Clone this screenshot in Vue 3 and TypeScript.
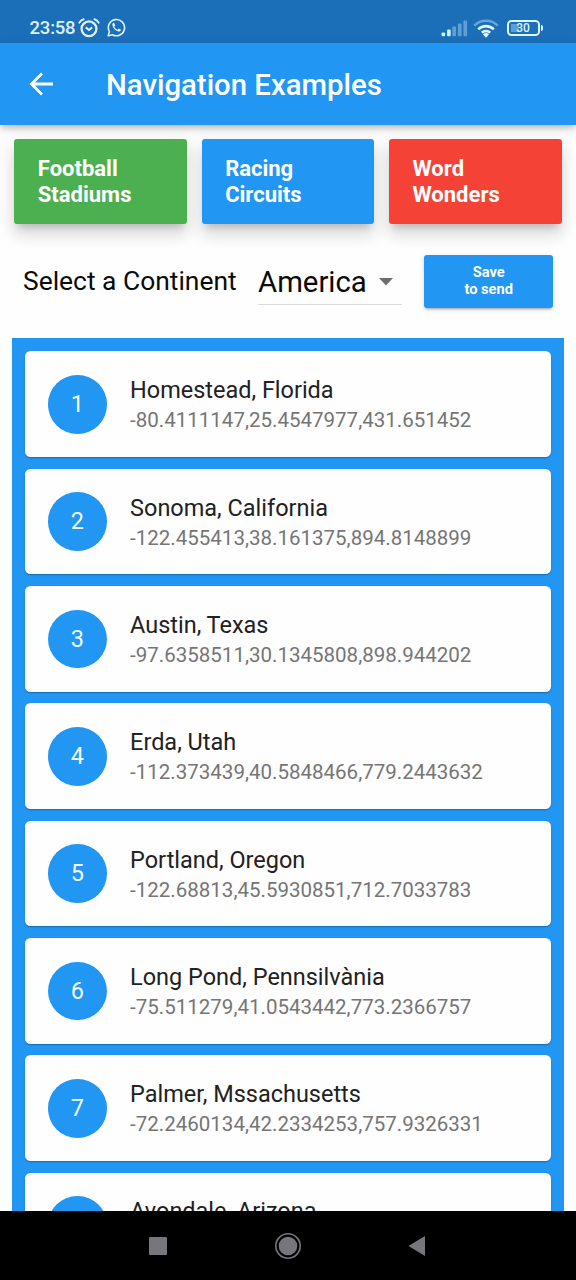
<script setup lang="ts">
interface Category {
  lines: [string, string]
  tone: 'green' | 'blue' | 'red'
}

interface Place {
  name: string
  coords: string
}

const categories: Category[] = [
  { lines: ['Football', 'Stadiums'], tone: 'green' },
  { lines: ['Racing', 'Circuits'], tone: 'blue' },
  { lines: ['Word', 'Wonders'], tone: 'red' },
]

const places: Place[] = [
  { name: 'Homestead, Florida', coords: '-80.4111147,25.4547977,431.651452' },
  { name: 'Sonoma, California', coords: '-122.455413,38.161375,894.8148899' },
  { name: 'Austin, Texas', coords: '-97.6358511,30.1345808,898.944202' },
  { name: 'Erda, Utah', coords: '-112.373439,40.5848466,779.2443632' },
  { name: 'Portland, Oregon', coords: '-122.68813,45.5930851,712.7033783' },
  { name: 'Long Pond, Pennsilvània', coords: '-75.511279,41.0543442,773.2366757' },
  { name: 'Palmer, Mssachusetts', coords: '-72.2460134,42.2334253,757.9326331' },
  { name: 'Avondale, Arizona', coords: '' },
]
</script>

<template>
  <div class="screen">
    <header class="status">
      <span class="clock">23:58</span>
      <svg class="alarm" width="22" height="20" viewBox="0 0 22 20" fill="none" stroke="#dff1fc">
        <circle cx="11" cy="10.8" r="7.4" stroke-width="2.3" />
        <path d="M1.4 4.6Q2.8 2 5.6 1.2M20.6 4.6Q19.2 2 16.4 1.2" stroke-width="2" stroke-linecap="round" />
        <path d="m7.8 9.4 3.2 2.6 3.2-2.6" stroke-width="2" />
      </svg>
      <svg class="whatsapp" width="19" height="19" viewBox="0 0 19 19" fill="none" stroke="#dff1fc">
        <path d="M1.2 17.8 2.4 13.6A8.1 8.1 0 1 1 5.5 16.7Z" stroke-width="1.6" stroke-linejoin="round" />
        <path d="M6.600 4.800c-.9.300-1.500 1.300-1.200 2.500.7 3.100 3 5.500 6.200 6.300 1.200.2 2.200-.5 2.400-1.800l-2.200-1.200-1.300 1.200c-1.500-.6-2.600-1.700-3.200-3.100l.9-1.200-.9-2.600z" fill="#dff1fc" stroke="none" />
      </svg>
      <div class="spacer"></div>
      <svg class="signal" width="27" height="17" viewBox="0 0 27 17" fill="#5f9fd6">
        <rect x="0.5" y="12.5" width="3.7" height="3.8" rx="1" fill="#c9f1ff" />
        <rect x="6" y="9.5" width="3.7" height="6.8" rx="1" fill="#c9f1ff" />
        <rect x="11.3" y="6.5" width="3.7" height="9.8" rx="1" />
        <rect x="16.9" y="3.5" width="3.7" height="12.8" rx="1" />
        <rect x="22.4" y="0.5" width="3.7" height="15.8" rx="1" />
      </svg>
      <svg class="wifi" width="26" height="19" viewBox="0 0 26 19" fill="none" stroke-width="2.6">
        <path d="M1.3 6.6a16.6 16.6 0 0 1 23.4 0" stroke="#68a5d9" />
        <path d="M5.2 10.4a11 11 0 0 1 15.6 0" stroke="#dff5ff" />
        <path d="M8.8 13.7a6.2 6.2 0 0 1 8.4 0" stroke="#dff5ff" />
        <path d="M10 15.5a4.3 4.3 0 0 1 6 0L13 18.700z" fill="#dff5ff" stroke="none" />
      </svg>
      <div class="battery"><span class="cell"><i class="charge"></i><b class="level">30</b></span><i class="tip"></i></div>
    </header>

    <nav class="appbar">
      <svg class="back" width="26" height="26" viewBox="0 0 26 26" fill="none" stroke="#fff" stroke-width="2.8">
        <path d="M25 13H4M14 2.500 3.500 13 14 23.500" />
      </svg>
      <h1 class="title">Navigation Examples</h1>
    </nav>

    <main class="content">
      <div class="categories">
        <button v-for="c in categories" :key="c.tone" class="category" :class="c.tone">
          <span v-for="line in c.lines" :key="line">{{ line }}</span>
        </button>
      </div>

      <div class="filter">
        <span class="label">Select a Continent</span>
        <div class="select">
          <span class="value">America</span>
          <svg class="caret" width="14" height="8" viewBox="0 0 14 8" fill="#6e6e6e"><path d="M0 0h14L7 7.500z" /></svg>
        </div>
        <button class="save"><span>Save</span><span>to send</span></button>
      </div>

      <section class="list">
        <article v-for="(p, i) in places" :key="p.name" class="card">
          <div class="badge">{{ i + 1 }}</div>
          <div class="info">
            <div class="name">{{ p.name }}</div>
            <div class="coords">{{ p.coords }}</div>
          </div>
        </article>
      </section>
    </main>

    <footer class="navbar">
      <svg width="18" height="18" viewBox="0 0 18 18"><rect width="18" height="18" rx="1" fill="#77767a" /></svg>
      <svg width="28" height="28" viewBox="0 0 28 28" fill="#77767a">
        <circle cx="14" cy="14" r="12.2" fill="none" stroke="#77767a" stroke-width="1.6" />
        <circle cx="14" cy="14" r="9.3" />
      </svg>
      <svg width="18" height="22" viewBox="0 0 18 22"><path d="M0.500 11 17 1v20z" fill="#77767a" /></svg>
    </footer>
  </div>
</template>

<style>
body {
  margin: 0;
}
</style>

<style scoped>
.screen {
  width: 576px;
  height: 1280px;
  display: flex;
  flex-direction: column;
  overflow: hidden;
  background: #fefefe;
  font-family: Roboto, 'Liberation Sans', sans-serif;
}

.status {
  height: 43px;
  flex: none;
  box-sizing: border-box;
  padding: 13px 33.5px 0 29.5px;
  display: flex;
  align-items: center;
  background: #1b6fb8;
  color: #dff1fc;
}

.clock {
  width: 48.5px;
  font-size: 18.5px;
  line-height: 29px;
  font-weight: 500;
  letter-spacing: -0.2px;
}

.alarm {
  margin-top: -1px;
}

.whatsapp {
  margin-left: 7px;
  margin-top: -1px;
}

.spacer {
  flex: 1;
}

.wifi {
  margin: 0 8px 0 5px;
}

.battery {
  display: flex;
  align-items: center;
  gap: 1px;
}

.cell {
  position: relative;
  box-sizing: border-box;
  width: 33px;
  height: 16px;
  border: 2px solid #dff5ff;
  border-radius: 4.5px;
  display: flex;
  align-items: center;
  justify-content: center;
}

.charge {
  position: absolute;
  left: 2px;
  top: 2px;
  width: 8px;
  height: 8px;
  background: #5c9dd4;
}

.level {
  position: relative;
  font-size: 12px;
  line-height: 12px;
  font-weight: 500;
  color: #dff5ff;
}

.tip {
  width: 2px;
  height: 6px;
  border-radius: 0 2px 2px 0;
  background: #dff5ff;
}

.appbar {
  position: relative;
  z-index: 1;
  height: 82px;
  flex: none;
  box-sizing: border-box;
  padding-left: 27.5px;
  display: flex;
  align-items: center;
  background: #2196f3;
  box-shadow: 0 3px 6px -1px rgba(0, 0, 0, 0.17), 0 6px 7px rgba(0, 0, 0, 0.08), 0 1px 12px rgba(0, 0, 0, 0.06);
}

.title {
  margin: 2px 0 0 52.5px;
  font-size: 29.33px;
  font-weight: 500;
  color: #fff;
}

.content {
  flex: 1;
  min-height: 0;
  overflow: hidden;
}

.categories {
  display: flex;
  gap: 14.6px;
  padding: 14.4px 14.3px 0;
}

button {
  border: 0;
  color: #fff;
  font-family: inherit;
  display: flex;
  flex-direction: column;
  justify-content: center;
}

.category {
  flex: 1;
  height: 84.6px;
  padding: 0 0 0 23.5px;
  border-radius: 3px;
  align-items: flex-start;
  font-size: 22px;
  line-height: 26px;
  font-weight: 700;
  box-shadow: 0 7px 7px -4px rgba(0, 0, 0, 0.17), 0 12px 15px 1px rgba(0, 0, 0, 0.09), 0 4px 20px 3px rgba(0, 0, 0, 0.06);
}

.green {
  background: #4caf50;
}

.blue {
  background: #2196f3;
}

.red {
  background: #f44336;
}

.filter {
  height: 114.5px;
  box-sizing: border-box;
  padding: 31px 22.8px 0 23px;
  display: flex;
  align-items: flex-start;
}

.label {
  width: 235px;
  font-size: 26.4px;
  line-height: 53px;
  color: #0a0a0a;
}

.select {
  width: 144px;
  height: 49px;
  border-bottom: 1px solid #dcdcdc;
  display: flex;
  align-items: center;
  color: #0a0a0a;
}

.value {
  font-size: 29.33px;
  line-height: 54px;
  padding-top: 6px;
}

.caret {
  margin: 5px 0 0 12px;
}

.save {
  width: 129px;
  height: 53px;
  margin-left: auto;
  padding: 0;
  align-items: center;
  border-radius: 3px;
  background: #2196f3;
  font-size: 14.67px;
  line-height: 17.5px;
  font-weight: 700;
  box-shadow: 0 3px 2px -2px rgba(0, 0, 0, 0.2), 0 2px 3px rgba(0, 0, 0, 0.12), 0 1px 6px rgba(0, 0, 0, 0.08);
}

.list {
  box-sizing: border-box;
  width: 552.5px;
  margin-left: 11.7px;
  padding: 13px 12.9px;
  display: flex;
  flex-direction: column;
  gap: 11.73px;
  background: #2196f3;
}

.card {
  height: 105.6px;
  flex: none;
  box-sizing: border-box;
  padding: 0 23.5px;
  display: flex;
  align-items: center;
  background: #fefefe;
  border-radius: 5.5px;
  box-shadow: 0 1px 1px rgba(0, 0, 0, 0.22), 0 1px 3px rgba(0, 0, 0, 0.08);
}

.badge {
  width: 58.7px;
  height: 58.7px;
  border-radius: 50%;
  background: #2196f3;
  color: #f4fbff;
  font-size: 23.47px;
  line-height: 59.4px;
  text-align: center;
}

.info {
  margin-left: 23.3px;
  padding-top: 2px;
  white-space: nowrap;
}

.name {
  font-size: 23.47px;
  line-height: 30px;
  color: #212121;
}

.coords {
  height: 30px;
  font-size: 20.53px;
  line-height: 31.6px;
  color: #757575;
}

.navbar {
  height: 69px;
  flex: none;
  box-sizing: border-box;
  padding: 0 150px 0 149px;
  display: flex;
  align-items: center;
  justify-content: space-between;
  background: #000;
}
</style>
